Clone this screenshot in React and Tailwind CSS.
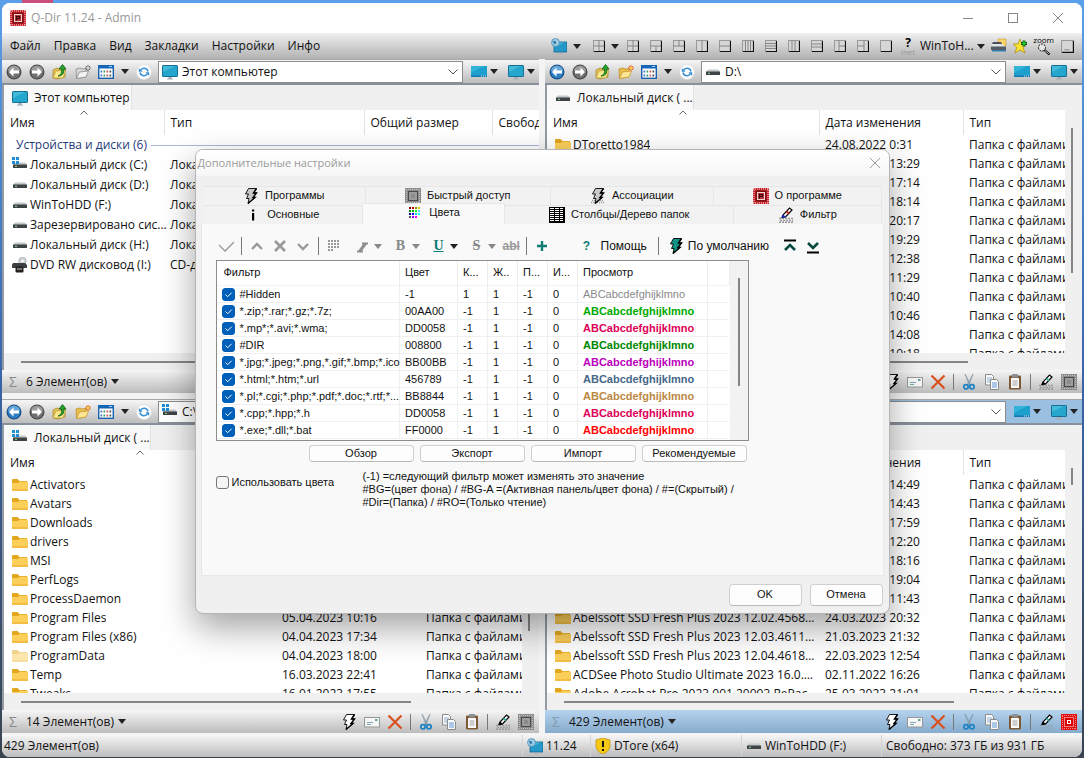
import React from "react";

/* ---------- small shared drawings ---------- */

function Svg({ w = 16, h = 16, children, className = "" }) {
  return (
    <svg width={w} height={h} viewBox={`0 0 ${w} ${h}`} className={`shrink-0 ${className}`} aria-hidden="true">
      {children}
    </svg>
  );
}

const Caret = ({ color = "#222" }) => (
  <Svg w={8} h={5}><path d="M0 0h8L4 5z" fill={color} /></Svg>
);

const Arrow = ({ dir, active }) => (
  <Svg>
    <circle cx="8" cy="8" r="7.5" fill={active ? "#1c4f86" : "#4a4a4a"} />
    <circle cx="8" cy="8" r="6.3" fill={active ? "#2d7fc4" : "#707070"} />
    <path d="M2 7a6 5.5 0 0 1 12 0z" fill={active ? "#8cc3ea" : "#b9b9b9"} opacity=".6" />
    <g transform={dir === "right" ? "translate(16 0) scale(-1 1)" : undefined}>
      <path d="M3 8l4.500-4.500v3H13v3H7.500v3z" fill="#fff" />
    </g>
  </Svg>
);

const FolderUp = () => (
  <Svg>
    <path d="M1 6l4-2 2 1 6-1v9l-8 2-4-1z" fill="#e3c257" stroke="#a9892f" strokeWidth=".8" />
    <path d="M1 14l3-7 10-1-3 8z" fill="#fbe98d" stroke="#b89a3a" strokeWidth=".7" />
    <path d="M6 12c3-1 4-3 3.500-7H7L10.500.5 14 5h-2.200c.6 4-1.300 7-5.800 7z" fill="#27a52c" stroke="#0d5f14" strokeWidth=".8" />
  </Svg>
);

const FolderNew = ({ gray }) => (
  <Svg>
    <path d="M1 5l4-1 2 1 4-.5V13L1.500 14.500z" fill={gray ? "#d6d6d6" : "#e7bd4b"} stroke={gray ? "#8d8d8d" : "#c2922b"} strokeWidth=".8" />
    <path d="M1.500 14.500l3-6.500 9-1-2.500 6z" fill={gray ? "#f3f3f3" : "#ffe694"} stroke={gray ? "#8d8d8d" : "#c99c35"} strokeWidth=".8" />
    <g stroke={gray ? "#666" : "#e8641b"} strokeWidth="1">
      <path d="M13 1v6M10 4h6M11 2l4 4M15 2l-4 4" />
    </g>
    <circle cx="13" cy="4" r="1.200" fill={gray ? "#ddd" : "#ffd23b"} />
  </Svg>
);

const ViewGrid = () => (
  <Svg>
    <rect x=".7" y="1.700" width="14.600" height="12.600" fill="#fff" stroke="#1660ad" strokeWidth="1.400" />
    <rect x="0" y="1" width="16" height="3.500" fill="#1767b8" />
    <rect x="11" y="2" width="3" height="1" fill="#9fd0f5" />
    {[["#4a78c8", 3], ["#3d9e68", 6], ["#d35c5c", 9], ["#555", 12]].map(([c, x]) => (
      <g key={x} fill={c}><rect x={x - .5} y="6.500" width="1.700" height="2" /><rect x={x - .5} y="10.500" width="1.700" height="2" /></g>
    ))}
  </Svg>
);

const Refresh = () => (
  <Svg>
    <circle cx="8" cy="8" r="7.500" fill="#fdfdfd" stroke="#dadada" strokeWidth=".6" />
    <g fill="none" stroke="#3790d4" strokeWidth="1.500">
      <path d="M4.500 6.500A4 4 0 0 1 12 7.500M11.500 9.500A4 4 0 0 1 4 8.500" />
    </g>
    <path d="M2.800 4v3.800h3.800zM13.200 12V8.200H9.400z" fill="#3790d4" />
  </Svg>
);

const Monitor = () => (
  <Svg>
    <rect x=".5" y="1.500" width="15" height="11" rx=".6" fill="#25a6cd" stroke="#176e94" />
    <path d="M1 2h12L1 8z" fill="#4abfdb" opacity=".8" />
    <path d="M6.500 13h3v1.500H11v1H5v-1h1.500z" fill="#a3adb5" />
  </Svg>
);

const Desktop = () => (
  <Svg>
    <rect x="0" y="2" width="16" height="11" fill="#1da0cd" />
    <path d="M0 2h13L0 9z" fill="#3ab8da" opacity=".8" />
    <rect x="0" y="11.500" width="16" height="1.500" fill="#1777b0" />
    <path d="M10 12h1m1 0h1m1 0h1" stroke="#d8f1fb" strokeWidth="1" />
  </Svg>
);

const Disk = ({ win }) => (
  <Svg>
    <path d="M3 5.500h10L15.500 8H.5z" fill="#c4c9cc" />
    <rect x="1" y="7.500" width="14" height="3.500" rx=".5" fill="#3e4346" />
    <rect x="3" y="8.800" width="2" height="1" fill="#8ee08f" />
    {win && (
      <g fill="#1d8fd6">
        <rect x="0" y="0" width="3" height="3" /><rect x="4" y="0" width="3" height="3" />
        <rect x="0" y="4" width="3" height="3" /><rect x="4" y="4" width="3" height="3" />
      </g>
    )}
  </Svg>
);

const Dvd = () => (
  <Svg>
    <circle cx="10.500" cy="4" r="3.800" fill="#cfd3d6" stroke="#9aa0a5" strokeWidth=".6" />
    <circle cx="10.500" cy="4" r="1.200" fill="#fff" />
    <path d="M1 6h12l2 2v3H0V8z" fill="#3c4043" />
    <rect x="3.500" y="9.500" width="8" height="6" rx="1" fill="#222" />
    <path d="M5 12h5" stroke="#ccc" strokeWidth="1" />
  </Svg>
);

const Folder = ({ faded }) => (
  <Svg className={faded ? "opacity-50" : ""}>
    <path d="M0 3a1 1 0 0 1 1-1h4.500l2 2H15v9.500H0z" fill="#e3a71e" />
    <path d="M0 6h6l1.500-1.300H15a1 1 0 0 1 1 1V13a1 1 0 0 1-1 1H1a1 1 0 0 1-1-1z" fill="#fccf5b" />
    <path d="M0 12h16v1a1 1 0 0 1-1 1H1a1 1 0 0 1-1-1z" fill="#f3bd44" />
  </Svg>
);

const Logo = () => (
  <Svg>
    <rect width="16" height="16" fill="#c81f28" />
    <path d="M0 1h16M0 15h16M1 0v16M15 0v16" stroke="#fbdcdc" strokeWidth="1" strokeDasharray="1 1" />
    <rect x="2.500" y="2.500" width="11" height="11" fill="#7a0f14" />
    <rect x="4.500" y="4.500" width="7" height="7" fill="#b8373b" stroke="#f6d4d4" strokeWidth="1" />
    <path d="M6.500 10.500v-4h3v2h-3" stroke="#3b0406" strokeWidth="1.200" fill="none" />
  </Svg>
);

const Bolt = ({ fill = "#fff", dust }) => (
  <Svg>
    {dust && <path d="M2 12.500h12M1 14.500h14" stroke="#999" strokeDasharray="1 1" strokeWidth="1.500" />}
    <path d="M5.500.5h8L10.500 5h3L10 9.500h2L5 15.500l1-5H3.500L5.500 6H2.500z" fill={fill} stroke="#000" strokeWidth=".9" />
    <path d="M13.500.5l-3 4.500h3L10 9.500h2L5 15.500" fill="none" stroke="#000" strokeWidth="1.400" />
  </Svg>
);

const Envelope = () => (
  <Svg>
    <rect x=".5" y="3.500" width="15" height="9.500" fill="#f6f6f6" stroke="#979797" />
    <path d="M3 8.500h6M3 10.500h4" stroke="#7ba7b5" />
    <rect x="11" y="5" width="2.500" height="2" fill="#6aa3a3" />
  </Svg>
);

const Cross = () => (
  <Svg><path d="M1.500 1.500l13 13M14.500 1.500l-13 13" stroke="#d9501f" strokeWidth="2.200" fill="none" /></Svg>
);

const Scissors = () => (
  <Svg>
    <path d="M4 0l5.500 10.500L8 11zM12 0L6.500 10.500 8 11z" fill="#a9bccb" stroke="#6f8799" strokeWidth=".5" />
    <g fill="none" stroke="#1b82c5" strokeWidth="1.700"><circle cx="5" cy="12.800" r="2.200" /><circle cx="11" cy="12.800" r="2.200" /></g>
  </Svg>
);

const Copy = () => (
  <Svg>
    <path d="M1.500.5h6l2 2V11h-8z" fill="#fafafa" stroke="#8a8a8a" />
    <path d="M3 4h5M3 6h5M3 8h5" stroke="#8fb1d8" />
    <path d="M6.500 5.500h6l2 2v8h-8z" fill="#fafafa" stroke="#8a8a8a" />
    <path d="M8 9h5M8 11h5M8 13h5" stroke="#5e95d6" />
  </Svg>
);

const Paste = () => (
  <Svg>
    <rect x="2" y="1.500" width="12" height="14" rx="1" fill="#7d5a35" />
    <rect x="4" y="4" width="8" height="10" fill="#fafafa" />
    <rect x="5" y="0" width="6" height="3.500" rx="1" fill="#8b9095" />
    <path d="M5.500 7h5M5.500 9h5M5.500 11h5" stroke="#a3a3a3" />
  </Svg>
);

const Marker = ({ red, blue }) => (
  <Svg>
    <path d="M1 11.500h14M2 13.500h13M1 15.200h14" stroke={blue ? "#93a9bb" : "#9c9c9c"} strokeDasharray="2 1" strokeWidth="1.400" />
    <path d="M4 10.500l1-2.500 6.500-7L14 3l-6.500 7z" fill="#fff" stroke="#000" strokeWidth="1.200" />
    <path d="M8.500 4.500l2.500 2" stroke={red ? "#d32222" : "#3ab0a0"} strokeWidth="2" />
    <path d="M3.500 11l1.500-3.500L8 10z" fill={red ? "#1b2bd0" : "#000"} />
  </Svg>
);

const DotSquare = ({ red }) => (
  <Svg>
    <rect width="16" height="16" fill={red ? "#e30b0b" : "#8b8b8b"} />
    <path d="M1 1.500h14M1 14.500h14" stroke={red ? "#ff8a8a" : "#c2c2c2"} strokeDasharray="1 1" />
    <path d="M1.500 2v13M14.500 2v13" stroke={red ? "#ff8a8a" : "#c2c2c2"} strokeDasharray="1 1" />
    <rect x="3.500" y="3.500" width="9" height="9" fill={red ? "#d00" : "#9c9c9c"} stroke={red ? "#fff" : "#000"} strokeDasharray="1 1" />
    <rect x="6" y="6" width="4" height="4" fill={red ? "#fff" : "#8b8b8b"} />
    {red && <rect x="7" y="7" width="2" height="2" fill="#d00" />}
  </Svg>
);

const Globe = () => (
  <Svg>
    <rect x="3" y="4" width="13" height="10" fill="#2498c9" stroke="#15688f" strokeWidth=".8" />
    <path d="M3.500 4.500h10l-10 5z" fill="#45b5d6" />
    <path d="M7 14.500h5v1H7z" fill="#9aa4ab" />
    <circle cx="4.500" cy="4.500" r="4" fill="#9fcde6" stroke="#3d82ab" strokeWidth=".7" />
    <path d="M1.500 3h3l1 2-2 1.500z" fill="#377fa8" />
  </Svg>
);

const LAYOUTS = [
  "M6 0v12M0 6h12", "M0 6h12M6 6v6", "M0 6h12M6 0v6", "M6 0v12", "M0 6h12",
  "M3.500 0v12M6 0v12M8.500 0v12", "M0 3.500h12M0 6h12M0 8.500h12", "M4 0v12M7 0v12",
  "M0 4h12M0 7h12", "M5 0v12M5 6h7", "M7 0v12M0 6h7", "",
];

const LayoutIcon = ({ d, size = 12 }) => (
  <svg width={size} height={size} viewBox="0 0 12 12" className="shrink-0" aria-hidden="true">
    <rect x=".5" y=".5" width="11" height="11" fill="#d6d6d6" stroke="#9a9a9a" />
    {d && <path d={d} stroke="#888" fill="none" />}
    <path d="M11.500 1v10.500H1" stroke="#111" strokeWidth="1.200" fill="none" />
  </svg>
);

/* ---------- reusable controls ---------- */

function IconButton({ label, children, className = "" }) {
  return (
    <button type="button" aria-label={label} className={`flex shrink-0 items-center justify-center ${className}`}>
      {children}
    </button>
  );
}

const BAR = "bg-linear-to-b from-[#f6f6f6] to-[#bcbcbc]";
const BAR_ACTIVE = "bg-linear-to-b from-[#b5d3ee] to-[#86abcc]";

function PaneToolbar({ id, path, icon, visited, active, grayNew }) {
  return (
    <div className={`flex h-[26px] shrink-0 items-center border-b-2 border-t border-b-[#86919d] border-t-[#a8a8a8] pl-1 pr-1 ${active ? "bg-linear-to-r from-[#e4e4e4] from-40% to-[#9bbfe0] to-60%" : BAR}`}>
      <div className="flex items-center gap-[7px]">
        <IconButton label="Назад"><Arrow dir="left" active={visited} /></IconButton>
        <IconButton label="Вперёд"><Arrow dir="right" /></IconButton>
        <IconButton label="Вверх"><FolderUp /></IconButton>
        <IconButton label="Новая папка"><FolderNew gray={grayNew} /></IconButton>
        <IconButton label="Вид"><ViewGrid /></IconButton>
        <IconButton label="Выбор вида"><Caret /></IconButton>
        <IconButton label="Обновить"><Refresh /></IconButton>
      </div>
      <div className="ml-1.5 flex h-[22px] min-w-0 flex-1 items-center gap-1 border border-[#8c8c8c] bg-white pl-[3px] pr-1">
        {icon}
        <select aria-label="Адрес" id={id} className="min-w-0 flex-1 appearance-none bg-transparent outline-none">
          <option>{path}</option>
        </select>
        <Svg w={10} h={6}><path d="M.5.500 5 5 9.500.5" stroke="#555" fill="none" /></Svg>
      </div>
      <div className="ml-2 flex items-center gap-[3px]">
        <IconButton label="Рабочий стол"><Desktop /></IconButton>
        <IconButton label="Список мест"><Caret /></IconButton>
        <IconButton label="Компьютер" className="ml-[7px]"><Monitor /></IconButton>
        <IconButton label="Список дисков"><Caret /></IconButton>
      </div>
    </div>
  );
}

const Divider = ({ className = "h-4" }) => <span className={`w-px shrink-0 bg-[#777] ${className}`} />;

function PaneStatus({ count, active }) {
  return (
    <div className={`flex h-[23px] shrink-0 items-center pl-[7px] pr-[5px] ${active ? BAR_ACTIVE : BAR}`}>
      <span className={`w-[17px] text-sm leading-4 ${active ? "text-[#8499ab]" : "text-[#8a8a8a]"}`}>Σ</span>
      <button type="button" className="flex items-center gap-1 whitespace-nowrap">{count} Элемент(ов) <Caret /></button>
      <div className="ml-auto flex items-center gap-[7px]">
        <IconButton label="Действия"><Bolt /></IconButton>
        <IconButton label="Письмо"><Envelope /></IconButton>
        <IconButton label="Удалить"><Cross /></IconButton>
        <Divider />
        <IconButton label="Вырезать"><Scissors /></IconButton>
        <IconButton label="Копировать"><Copy /></IconButton>
        <IconButton label="Вставить"><Paste /></IconButton>
        <Divider />
        <IconButton label="Фильтр"><Marker blue={active} /></IconButton>
        <IconButton label="Панель"><DotSquare red={active} /></IconButton>
      </div>
    </div>
  );
}

function FileTable({ columns, rows, rowClass, group, nameClass = "truncate" }) {
  return (
    <table className="w-full table-fixed border-collapse whitespace-nowrap">
      <colgroup>{columns.map((c) => <col key={c.title} className={c.width} />)}</colgroup>
      <thead>
        <tr className="h-[25px]">
          {columns.map((c, i) => (
            <th key={c.title} className={`overflow-hidden p-0 text-left font-normal ${i ? "border-l border-[#e2e2e2] pl-1.5" : "relative pl-1.5"}`}>
              {c.title}
              {i === 0 && <Svg w={8} h={5} className="absolute left-1/2 top-0 -translate-x-1/2"><path d="M.5 4.500 4 1l3.500 3.500" stroke="#666" fill="none" /></Svg>}
            </th>
          ))}
        </tr>
      </thead>
      <tbody>
        {group && (
          <tr className="h-5">
            <td colSpan={columns.length} className="p-0 pl-3 text-[#1f3a7a]">
              <div className="flex items-center gap-1">{group}<span className="h-px flex-1 bg-[#a9b7d6]" /></div>
            </td>
          </tr>
        )}
        {rows.map((r, i) => (
          <tr key={i} className={rowClass}>
            <td className="p-0 pl-2">
              <div className="flex items-center gap-0.5">{r[0]}<span className={nameClass}>{r[1]}</span></div>
            </td>
            {columns.slice(1).map((c, j) => (
              <td key={c.title} className="overflow-hidden p-0 pl-1.5">{r[j + 2]}</td>
            ))}
          </tr>
        ))}
      </tbody>
    </table>
  );
}

function Pane({ id, path, addressIcon, tab, tabIcon, tabWidth, count, active, visited, grayNew, vThumb, hThumb, ...table }) {
  return (
    <section className="flex min-h-0 min-w-0 flex-col">
      <PaneToolbar id={id} path={path} icon={addressIcon} visited={visited} active={active} grayNew={grayNew} />
      <div className="flex min-h-0 flex-1 flex-col border-l-2 border-[#939ca5] bg-[#f0f0f0]">
        <div className="flex h-[25px] shrink-0">
          <button type="button" className={`flex items-center gap-1.5 whitespace-nowrap border-r border-[#e2e2e2] bg-[#f9f9f9] pl-2 ${tabWidth}`}>{tabIcon}{tab}</button>
        </div>
        <div className="flex min-h-0 flex-1">
          <div className="min-w-0 flex-1 overflow-hidden bg-white"><FileTable {...table} /></div>
          {vThumb && <div className="flex w-[17px] shrink-0 pl-1.5"><span className={`w-0.5 bg-[#858585] ${vThumb}`} /></div>}
        </div>
        <div className="flex h-[17px] shrink-0 items-center pl-[17px]"><span className={`h-0.5 bg-[#858585] ${hThumb}`} /></div>
      </div>
      <PaneStatus count={count} active={active} />
    </section>
  );
}

/* ---------- pane data ---------- */

const DRIVE_COLUMNS = [
  { title: "Имя", width: "w-[160px]" }, { title: "Тип", width: "w-[200px]" },
  { title: "Общий размер", width: "w-[128px]" }, { title: "Свободно", width: "w-auto" },
];
const DRIVES = [
  [<Disk win />, "Локальный диск (C:)", "Локальный диск"],
  [<Disk />, "Локальный диск (D:)", "Локальный диск"],
  [<Disk />, "WinToHDD (F:)", "Локальный диск"],
  [<Disk />, "Зарезервировано сис...", "Локальный диск"],
  [<Disk />, "Локальный диск (H:)", "Локальный диск"],
  [<Dvd />, "DVD RW дисковод (I:)", "CD-дисковод"],
];

const FILE_COLUMNS = [
  { title: "Имя", width: "w-[272px]" }, { title: "Дата изменения", width: "w-[144px]" }, { title: "Тип", width: "w-auto" },
];
const TYPE = "Папка с файлами";
const folderRow = (name, date, faded) => [<Folder faded={faded} />, name, date, TYPE];

const D_ROWS = [
  folderRow("DToretto1984", "24.08.2022 0:31"),
  ...["13:29", "17:14", "18:14", "20:17", "19:29", "12:38", "11:29", "10:40", "10:46", "14:08", "10:18"]
    .map((t) => folderRow("", `05.04.2023 ${t}`)),
];
const C_ROWS = [
  ...["Activators", "Avatars", "Downloads", "drivers", "MSI", "PerfLogs", "ProcessDaemon"].map((n) => folderRow(n, "")),
  folderRow("Program Files", "05.04.2023 10:16"),
  folderRow("Program Files (x86)", "04.04.2023 17:34"),
  folderRow("ProgramData", "04.04.2023 18:00", true),
  folderRow("Temp", "16.03.2023 22:41"),
  folderRow("Tweaks", "16.01.2023 17:55"),
];
const E_ROWS = [
  ...["14:49", "14:43", "17:59", "12:20", "18:16", "19:04", "11:43"].map((t) => folderRow("", `24.03.2023 ${t}`)),
  folderRow("Abelssoft SSD Fresh Plus 2023 12.02.45685 Portable", "24.03.2023 20:32"),
  folderRow("Abelssoft SSD Fresh Plus 2023 12.03.46118 Portable", "21.03.2023 21:32"),
  folderRow("Abelssoft SSD Fresh Plus 2023 12.04.46189 Portable", "22.03.2023 12:54"),
  folderRow("ACDSee Photo Studio Ultimate 2023 16.0.3.3188", "02.11.2022 16:26"),
  folderRow("Adobe Acrobat Pro 2023.001.20093 RePack by KpoJIuK", "25.03.2023 21:01"),
];

/* ---------- settings dialog ---------- */

const InfoIcon = () => (
  <Svg><path d="M7 2.500h2.200v2H7zM7 6h2.200v7.500H7z" fill="#000" /></Svg>
);
const PaletteIcon = () => (
  <Svg>
    {["#800", "#c00", "#880", "#cc0", "#080", "#0a0", "#0f0", "#6cf", "#008", "#00f", "#0cc", "#0ff", "#555", "#80f", "#f0f", "#fff"].map((c, i) => (
      <rect key={i} x={2 + (i % 4) * 3} y={2 + Math.floor(i / 4) * 3} width="2" height="2" fill={c} />
    ))}
  </Svg>
);
const TableIcon = () => (
  <Svg>
    <rect width="16" height="16" fill="#000" />
    {[1, 3, 5, 7, 9, 11, 13].map((y) => <g key={y} fill="#fff"><rect x="1" y={y} width="4" height="1" /><rect x="6" y={y} width="4" height="1" /><rect x="11" y={y} width="3" height="1" /></g>)}
  </Svg>
);

const TABS_TOP = [
  ["Программы", <Bolt fill="#c9c9c9" />], ["Быстрый доступ", <DotSquare />],
  ["Ассоциации", <Bolt fill="#c9c9c9" dust />], ["О программе", <Logo />],
];
const TABS_BOTTOM = [
  ["Основные", <InfoIcon />], ["Цвета", <PaletteIcon />], ["Столбцы/Дерево папок", <TableIcon />], ["Фильтр", <Marker red />],
];

const FILTERS = [
  ["#Hidden", "-1", "1", "1", "-1", "text-[#8a8a8a]"],
  ["*.zip;*.rar;*.gz;*.7z;", "00AA00", "-1", "1", "-1", "font-bold text-[#00aa00]"],
  ["*.mp*;*.avi;*.wma;", "DD0058", "-1", "1", "-1", "font-bold text-[#dd0058]"],
  ["#DIR", "008800", "-1", "1", "-1", "font-bold text-[#008800]"],
  ["*.jpg;*.jpeg;*.png,*.gif;*.bmp;*.ico", "BB00BB", "-1", "1", "-1", "font-bold text-[#bb00bb]"],
  ["*.html;*.htm;*.url", "456789", "-1", "1", "-1", "font-bold text-[#456789]"],
  ["*.pl;*.cgi;*.php;*.pdf;*.doc;*.rtf;*...", "BB8844", "-1", "1", "-1", "font-bold text-[#bb8844]"],
  ["*.cpp;*.hpp;*.h", "DD0058", "-1", "1", "-1", "font-bold text-[#dd0058]"],
  ["*.exe;*.dll;*.bat", "FF0000", "-1", "1", "-1", "font-bold text-[#ff0000]"],
];
const FILTER_COLS = [
  ["Фильтр", "w-[183px]"], ["Цвет", "w-[58px]"], ["К...", "w-[30px]"], ["Ж..", "w-[30px]"],
  ["П...", "w-[30px]"], ["И...", "w-[30px]"], ["Просмотр", "w-[130px]"], ["", "w-auto"],
];

function Tab({ label, icon, selected }) {
  return (
    <button
      type="button"
      role="tab"
      aria-selected={!!selected}
      className={`flex items-center justify-center gap-1.5 border-r border-t border-[#e6e6e6] ${selected ? "-mt-0.5 bg-[#f9f9f9] pb-0.5" : "bg-[#f2f2f2]"}`}
    >
      {icon}<span>{label}</span>
    </button>
  );
}

const PushButton = ({ children, className }) => (
  <button type="button" className={`flex items-center justify-center rounded border border-[#cfcfcf] border-b-[#bbb] bg-[#fdfdfd] ${className}`}>{children}</button>
);

const Glyph = ({ d, stroke = "#999", width = 2 }) => (
  <Svg><path d={d} stroke={stroke} strokeWidth={width} fill="none" /></Svg>
);

function StyleButton({ label, children, on }) {
  return (
    <div className="flex items-center gap-[3px]">
      <IconButton label={label} className="h-4 w-4">{children}</IconButton>
      <IconButton label={`${label}: выбор`}><Caret color={on ? "#222" : "#888"} /></IconButton>
    </div>
  );
}

function DialogToolbar() {
  const serif = "font-['Liberation_Serif',serif] text-sm leading-4 font-bold";
  return (
    <div className="flex h-[35px] items-center gap-[7px] whitespace-nowrap pl-0.5 pt-2 text-xs">
      <IconButton label="Применить"><Glyph d="M1 7l6 6 9-9" width={1.3} /></IconButton>
      <Divider className="h-[18px]" />
      <IconButton label="Выше"><Glyph d="M3 11l5-5 5 5" width={2.4} /></IconButton>
      <IconButton label="Удалить"><Glyph d="M3 3l10 10M13 3L3 13" width={2.6} /></IconButton>
      <IconButton label="Ниже"><Glyph d="M3 6l5 5 5-5" width={2.4} /></IconButton>
      <Divider className="h-[18px]" />
      <IconButton label="Цвет">
        <Svg>{[2, 5, 8, 11].map((y, r) => [2, 5, 8, 11].map((x, c) => (r === 3 && c > 1) ? null : <rect key={`${x}${y}`} x={x} y={y} width="2" height="2" fill="#999" />))}</Svg>
      </IconButton>
      <div className="ml-1.5 flex items-center gap-[11px]">
        <StyleButton label="Курсив"><Svg><path d="M2 13.500h6M7 5.500h6" stroke="#8f8f8f" strokeWidth="2" /><path d="M4.500 13.500l6-8" stroke="#8f8f8f" strokeWidth="3" /></Svg></StyleButton>
        <StyleButton label="Жирный"><span className={`${serif} text-[#888]`}>B</span></StyleButton>
        <StyleButton label="Подчёркнутый" on><span className={`${serif} text-[#0f7d74] underline`}>U</span></StyleButton>
        <StyleButton label="Зачёркнутый"><span className={`${serif} text-[#888] line-through`}>S</span></StyleButton>
      </div>
      <button type="button" aria-label="Имя" className="w-4 font-bold leading-4 text-[#999] line-through">abl</button>
      <Divider className="h-[18px]" />
      <IconButton label="Добавить"><Glyph d="M8 3v10M3 8h10" stroke="#0f7d74" width={2.4} /></IconButton>
      <button type="button" className="ml-6 flex items-center gap-2"><span className="w-3 font-bold text-[#0f7d74]">?</span>Помощь</button>
      <Divider className="ml-1 h-[18px]" />
      <button type="button" className="ml-0.5 flex items-center gap-1"><Bolt fill="#0f9384" />По умолчанию</button>
      <IconButton label="В начало" className="ml-1.5"><Svg><path d="M2 2.500h12" stroke="#000" strokeWidth="2" /><path d="M3 12l5-5 5 5" stroke="#064a41" strokeWidth="2.600" fill="none" /></Svg></IconButton>
      <IconButton label="В конец"><Svg><path d="M2 14.500h12" stroke="#000" strokeWidth="2" /><path d="M3 5l5 5 5-5" stroke="#064a41" strokeWidth="2.600" fill="none" /></Svg></IconButton>
    </div>
  );
}

function FilterTable() {
  return (
    <div className="flex h-[181px] w-[533px] border border-[#8c8c8c] bg-white">
      <div className="min-w-0 flex-1 overflow-hidden">
        <table className="w-full table-fixed border-collapse whitespace-nowrap">
          <colgroup>{FILTER_COLS.map(([t, w]) => <col key={t} className={w} />)}</colgroup>
          <thead>
            <tr className="h-[25px] border-b border-[#f4f4f4]">
              {FILTER_COLS.map(([t], i) => (
                <th key={t} className={`border-r border-[#ececec] p-0 text-left font-normal ${i ? "pl-[5px]" : "pl-[7px]"}`}>{t}</th>
              ))}
            </tr>
          </thead>
          <tbody>
            {FILTERS.map(([name, color, k, b, u, style], i) => (
              <tr key={i} className="h-[17px] border-b border-[#efefef]">
                <td className="border-r border-[#efefef] p-0 pl-[5px]">
                  <label className="flex items-center gap-[5px]">
                    <span className="grid shrink-0">
                      <input type="checkbox" defaultChecked className="h-[13px] w-[13px] appearance-none rounded-[3px] border border-[#777] bg-white [grid-area:1/1] checked:border-[#005fb8] checked:bg-[#005fb8]" />
                      <Svg w={13} h={13} className="pointer-events-none [grid-area:1/1]"><path d="M3.500 6.500l2.200 2.200 4-4" stroke="#fff" fill="none" /></Svg>
                    </span>
                    {name}
                  </label>
                </td>
                {[color, k, b, u, "0"].map((v, j) => <td key={j} className="border-r border-[#efefef] p-0 pl-[5px]">{v}</td>)}
                <td className={`border-r border-[#efefef] p-0 pl-[5px] ${style}`}>ABCabcdefghijklmno</td>
                <td className="p-0" />
              </tr>
            ))}
          </tbody>
        </table>
      </div>
      <div className="flex w-[18px] shrink-0 justify-center bg-[#f2f2f2] pt-[17px]"><span className="h-[108px] w-0.5 bg-[#858585]" /></div>
    </div>
  );
}

function SettingsDialog() {
  return (
    <div className="absolute inset-0 flex items-center justify-center pt-1 font-['Liberation_Sans',Arial,sans-serif] text-[11px] leading-[13px]">
      <div role="dialog" aria-label="Дополнительные настройки" className="w-[695px] overflow-hidden rounded-lg border border-[#b4b4b4] bg-[#f0f0f0] shadow-[0_14px_34px_rgba(0,0,0,0.36)]">
        <div className="flex h-[26px] items-center justify-between bg-linear-to-b from-white to-[#f7f7f7] pl-0.5 pr-1.5 font-['Open_Sans','Noto_Sans',sans-serif] text-[11px] text-[#9a9a9a]">
          Дополнительные настройки
          <IconButton label="Закрыть"><Glyph d="M3 3l10 10M13 3L3 13" stroke="#999" width={1} /></IconButton>
        </div>
        <div role="tablist" className="mx-[7px] pt-[10px]">
          <div className="grid h-[19px] grid-cols-[163fr_184fr_163fr_167fr]">
            {TABS_TOP.map(([l, i]) => <Tab key={l} label={l} icon={i} />)}
          </div>
          <div className="grid h-[19px] grid-cols-[160fr_142fr_228fr_147fr]">
            {TABS_BOTTOM.map(([l, i]) => <Tab key={l} label={l} icon={i} selected={l === "Цвета"} />)}
          </div>
        </div>
        <div className="mx-[5px] h-[352px] border border-t-0 border-[#e8e8e8] bg-[#f9f9f9] pl-3.5 pt-px">
          <DialogToolbar />
          <FilterTable />
          <div className="ml-[93px] mt-1 flex gap-1.5">
            {["Обзор", "Экспорт", "Импорт", "Рекомендуемые"].map((t) => <PushButton key={t} className="h-[17px] w-[105px]">{t}</PushButton>)}
          </div>
          <div className="mt-2 flex">
            <label className="flex h-[26px] w-[147px] items-center gap-[3px] whitespace-nowrap">
              <input type="checkbox" className="h-[13px] w-[13px] shrink-0 appearance-none rounded-[3px] border border-[#777] bg-[#f5f5f5] checked:bg-[#005fb8]" />
              Использовать цвета
            </label>
            <p>
              (-1) =следующий фильтр может изменять это значение<br />
              #BG=(цвет фона) / #BG-A =(Активная панель/цвет фона) / #=(Скрытый) /<br />
              #Dir=(Папка) / #RO=(Только чтение)
            </p>
          </div>
        </div>
        <div className="flex justify-end gap-2 pb-[7px] pr-1.5 pt-2">
          <PushButton className="h-[22px] w-[73px]">OK</PushButton>
          <PushButton className="h-[22px] w-[73px]">Отмена</PushButton>
        </div>
      </div>
    </div>
  );
}

/* ---------- window ---------- */

function TitleBar() {
  return (
    <header className="flex h-[30px] shrink-0 items-center bg-white pl-2 pr-0.5 text-[#999]">
      <Logo />
      <h1 className="ml-[5px]">Q-Dir 11.24 - Admin</h1>
      <div className="ml-auto flex">
        <IconButton label="Свернуть" className="w-[45px]"><Svg w={10} h={10}><path d="M0 5.500h10" stroke="#888" /></Svg></IconButton>
        <IconButton label="Развернуть" className="w-[45px]"><Svg w={10} h={10}><rect x=".5" y=".5" width="9" height="9" stroke="#888" fill="none" /></Svg></IconButton>
        <IconButton label="Закрыть" className="w-[45px]"><Svg w={10} h={10}><path d="M0 0l10 10M10 0L0 10" stroke="#888" /></Svg></IconButton>
      </div>
    </header>
  );
}

function MenuBar() {
  return (
    <div className="grid h-[26px] shrink-0 grid-cols-2 gap-1.5 bg-linear-to-b from-[#f0f0f0] to-[#b2b2b2]">
      <nav className="flex items-center gap-[13px] pl-2">
        {["Файл", "Правка", "Вид", "Закладки", "Настройки", "Инфо"].map((m) => <button key={m} type="button">{m}</button>)}
      </nav>
      <div className="flex items-center pl-1.5">
        <IconButton label="Обзор"><Globe /></IconButton>
        <IconButton label="Обзор: выбор" className="ml-1.5"><Caret /></IconButton>
        <IconButton label="Раскладка" className="ml-3"><LayoutIcon d={LAYOUTS[0]} size={12} /></IconButton>
        <IconButton label="Раскладка: выбор" className="ml-1.5"><Caret /></IconButton>
        <div className="ml-2 flex gap-[11px]">
          {LAYOUTS.map((d, i) => <IconButton key={i} label={`Раскладка ${i + 1}`}><LayoutIcon d={d} /></IconButton>)}
        </div>
        <button type="button" className="ml-2 flex w-4 shrink-0 flex-col items-center text-[#999]">
          <span className="text-xs leading-[10px] font-bold text-black">?</span>
          <span className="text-[8px] leading-[7px]">inet</span>
        </button>
        <button type="button" className="ml-1 flex items-center gap-[3px] whitespace-nowrap">WinToH... <Caret /></button>
        <IconButton label="Печать" className="ml-1.5">
          <Svg>
            <path d="M7 1h8v7H7z" fill="#f7d468" stroke="#c79d33" strokeWidth=".6" />
            <path d="M2 4h8l1 2H1z" fill="#4b5157" /><path d="M1 6h10l4 3H0z" fill="#dfe4e8" /><path d="M0 8.500h15V12H0z" fill="#555c62" /><path d="M1 12h14v1.500H1z" fill="#2e7eb2" />
          </Svg>
        </IconButton>
        <IconButton label="Избранное" className="ml-1.5">
          <Svg><path d="M7 1l2 5h5l-4 3.500L12 15l-5-3-5 3 1.700-5.500L0 6h5z" fill="#f8e22f" stroke="#a58a12" strokeWidth=".7" /><path d="M11 2.500v6M8 5.500h6" stroke="#0c5a12" strokeWidth="2.800" /><path d="M11 3v5M8.500 5.500h5" stroke="#2fd13a" strokeWidth="1.200" /></Svg>
        </IconButton>
        <button type="button" aria-label="Лупа" className="ml-1.5 flex w-[18px] shrink-0 flex-col items-center">
          <span className="text-[8px] leading-[6px] text-black">zoom</span>
          <Svg w={14} h={12}><circle cx="5" cy="4.500" r="3.500" fill="#e4e4e4" stroke="#000" strokeDasharray="2 1" /><path d="M7.500 7l5 4.500" stroke="#000" strokeWidth="2.200" /><path d="M7.800 7.300l4 3.500" stroke="#fff" strokeWidth=".8" /></Svg>
        </button>
        <IconButton label="Панель" className="ml-2"><LayoutIcon d="M3 9h5" size={13} /></IconButton>
      </div>
    </div>
  );
}

function StatusBar() {
  const cell = "flex items-center gap-[3px] border-l border-[#d4d4d4] pl-1 whitespace-nowrap";
  return (
    <footer className={`mt-0.5 grid h-[22px] shrink-0 grid-cols-[520px_68px_151px_140px_auto] rounded-b-lg ${BAR}`}>
      <span className="flex items-center pl-0.5">429 Элемент(ов)</span>
      <span className={cell}><Globe />11.24</span>
      <span className={cell}>
        <Svg><path d="M8 0l7 2v6c0 4-4 7-7 8-3-1-7-4-7-8V2z" fill="#f6c915" stroke="#b98a0a" strokeWidth=".7" /><path d="M8 3v6M8 11v2" stroke="#111" strokeWidth="2" /></Svg>
        DTore (x64)
      </span>
      <span className={cell}><Disk />WinToHDD (F:)</span>
      <span className={cell}>Свободно: 373 ГБ из 931 ГБ</span>
    </footer>
  );
}

export default function App() {
  return (
    <div className="relative flex h-screen flex-col bg-linear-to-b from-[#5a9fe9] via-[#3a64a8] to-[#39444f] px-0.5 pb-px pt-[3px] font-['Open_Sans','Noto_Sans',sans-serif] text-xs leading-4 text-[#111]">
      <span className="absolute left-[22px] top-0 h-[3px] w-[31px] bg-[#c9507c]" />
      <div className="flex min-h-0 flex-1 flex-col overflow-hidden rounded-lg bg-[#f4f4f4]">
        <TitleBar />
        <MenuBar />
        <main className="grid min-h-0 flex-1 grid-cols-2 grid-rows-2 gap-1.5">
          <Pane id="address-1" path="Этот компьютер" addressIcon={<Monitor />} tab="Этот компьютер" tabIcon={<Monitor />} tabWidth="w-[128px]" count="6" grayNew
            columns={DRIVE_COLUMNS} rows={DRIVES} rowClass="h-5" nameClass="" group="Устройства и диски (6)" hThumb="w-[390px]" />
          <Pane id="address-2" path="D:\" addressIcon={<Disk />} tab="Локальный диск ( ..." tabIcon={<Disk />} tabWidth="w-[147px]" count="429" visited
            columns={FILE_COLUMNS} rows={D_ROWS} rowClass="h-[19px]" vThumb="mt-[18px] h-[145px]" hThumb="w-[404px]" />
          <Pane id="address-3" path="C:\" addressIcon={<Disk win />} tab="Локальный диск ( ..." tabIcon={<Disk win />} tabWidth="w-[147px]" count="14" visited
            columns={FILE_COLUMNS} rows={C_ROWS} rowClass="h-[19px]" vThumb="mt-[18px] h-[163px]" hThumb="w-[390px]" />
          <Pane id="address-4" path="D:\" addressIcon={<Disk />} tab="Локальный диск ( ..." tabIcon={<Disk />} tabWidth="w-[147px]" count="429" visited active
            columns={FILE_COLUMNS} rows={E_ROWS} rowClass="h-[19px]" vThumb="mt-[18px] h-[17px]" hThumb="w-[390px]" />
        </main>
        <StatusBar />
      </div>
      <SettingsDialog />
    </div>
  );
}
